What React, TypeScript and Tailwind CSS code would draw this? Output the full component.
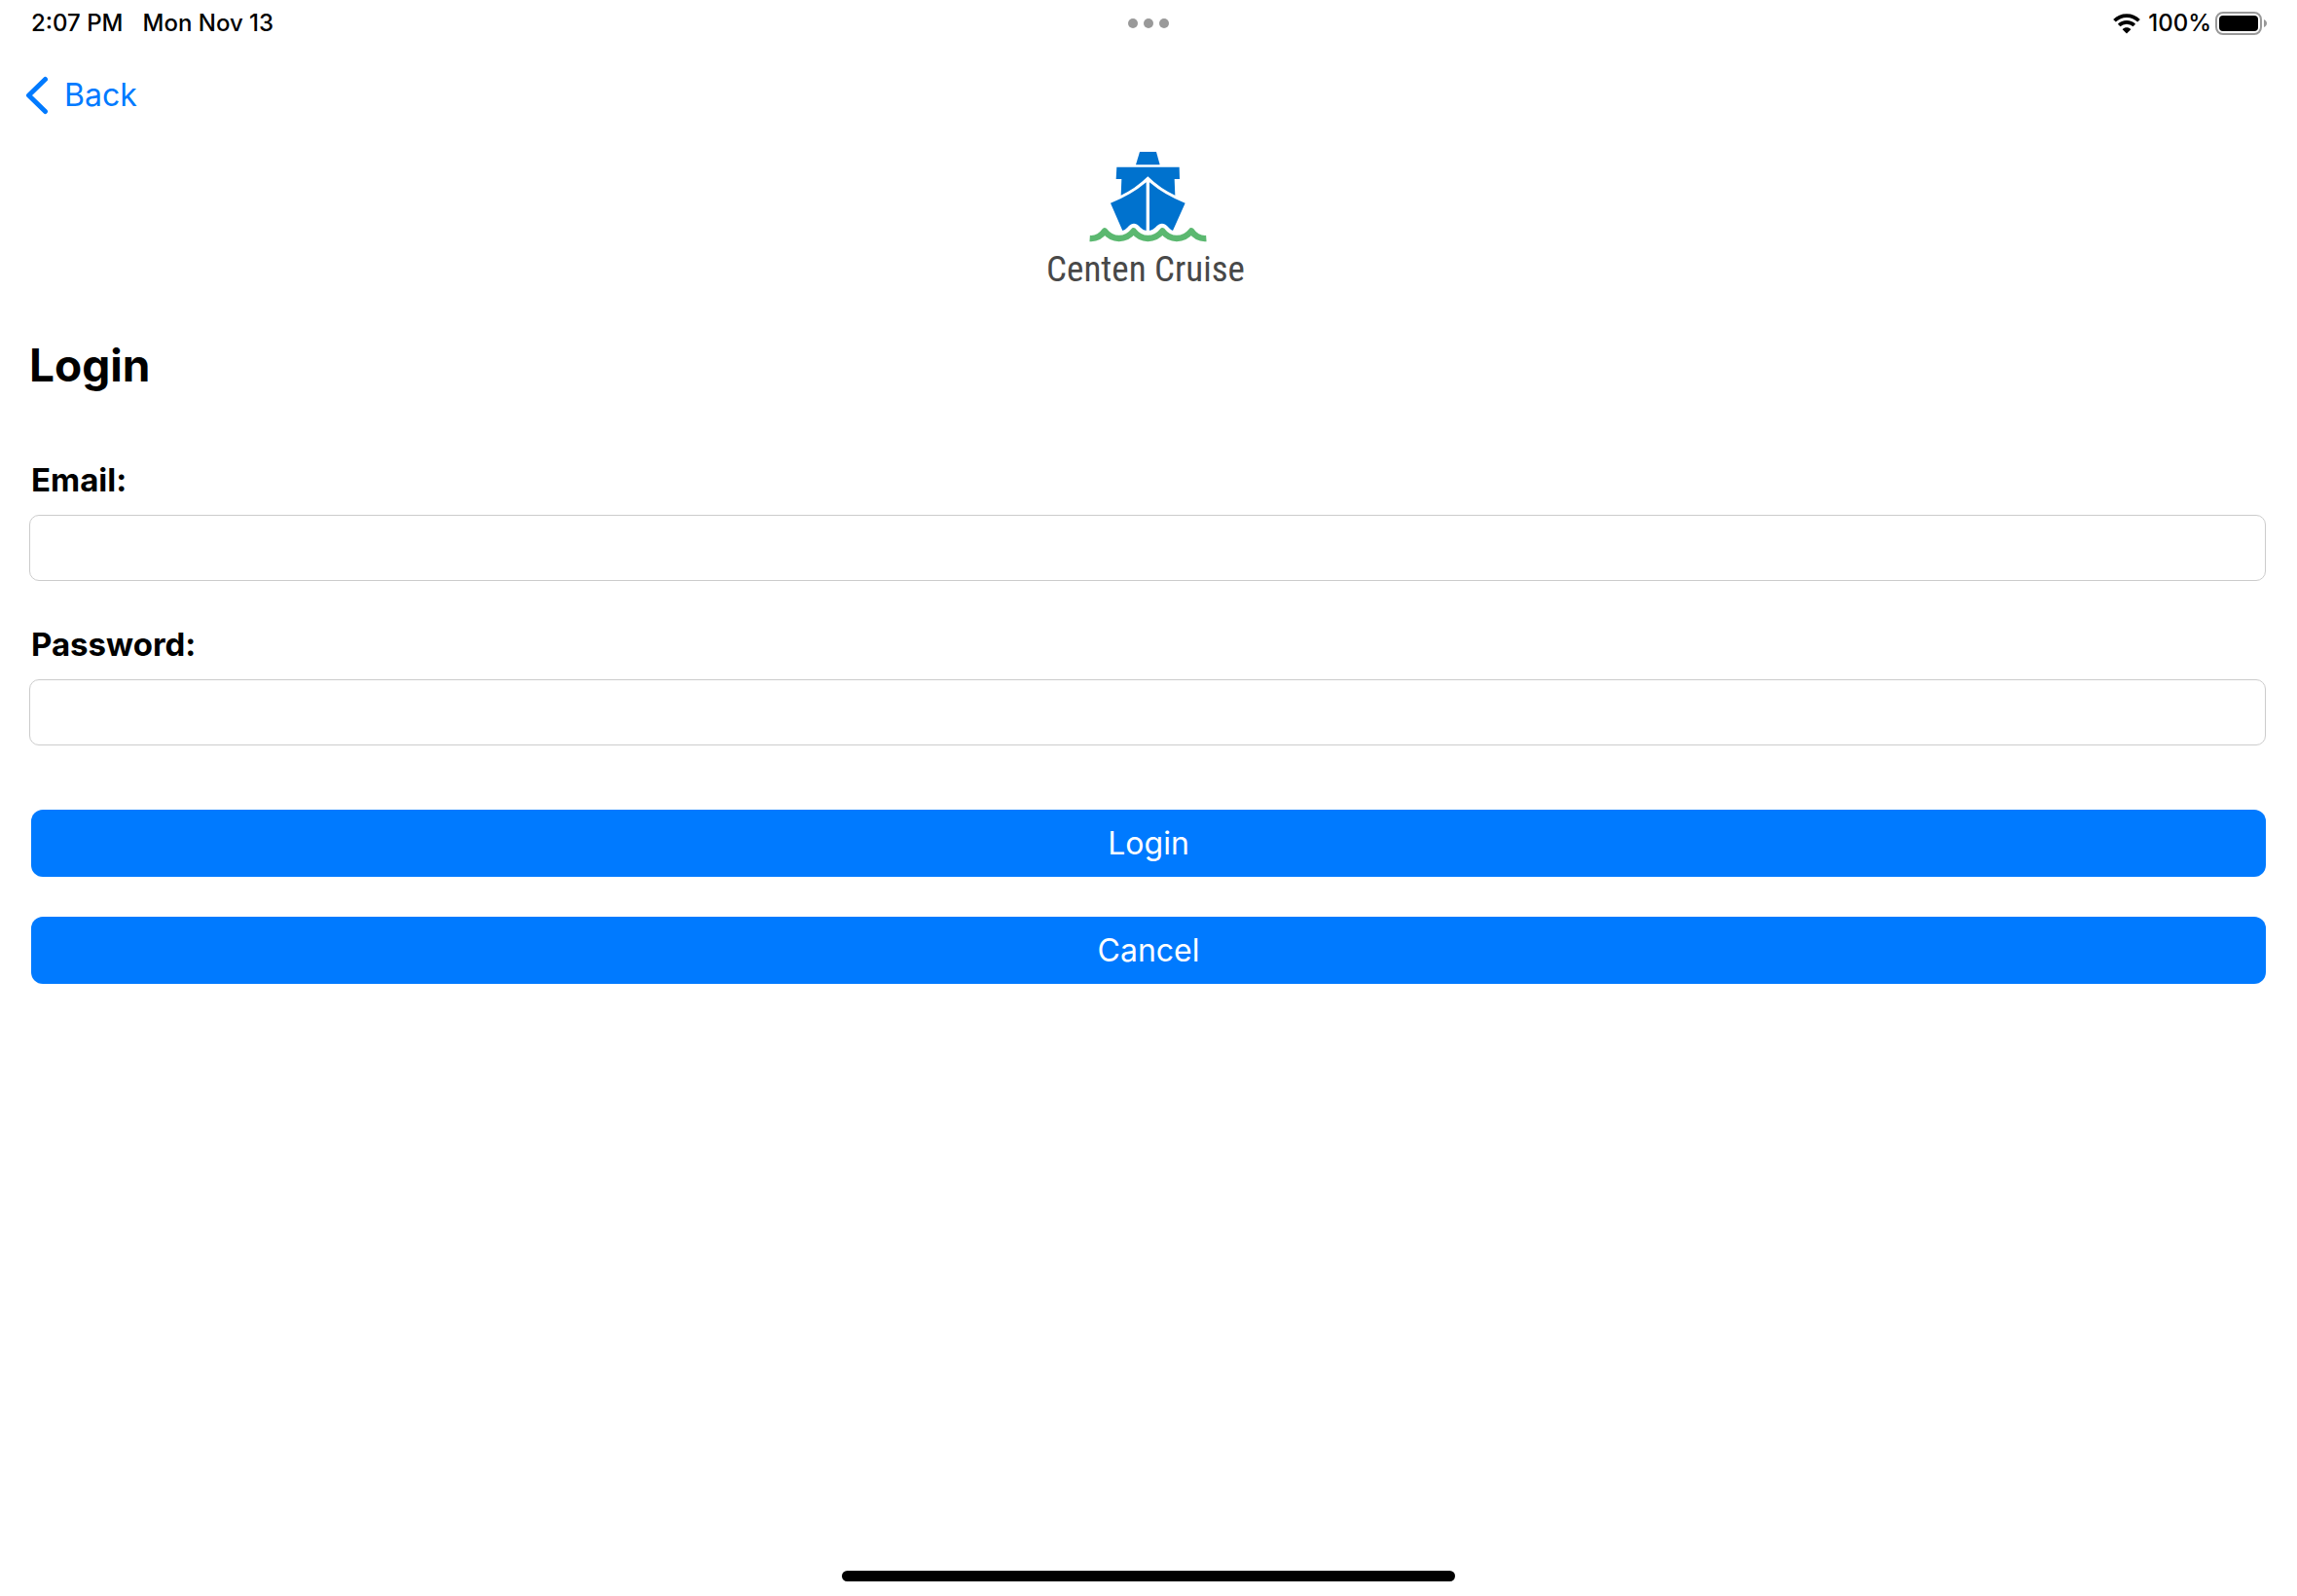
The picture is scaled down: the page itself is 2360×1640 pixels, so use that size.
import React from "react";

function WifiIcon() {
  return (
    <svg viewBox="0 0 84 62" className="h-[21px] w-7" aria-label="Wi-Fi">
      <g fill="none" stroke="#000" strokeWidth="11">
        <path d="M4.500 21.500 C25 0.500 59 0.500 79.500 21.500" />
        <path d="M18.500 35.500 C31.500 23 52.500 23 65.500 35.500" />
      </g>
      <path d="M42 61 L29 48 C36 40.500 48 40.500 55 48 Z" />
    </svg>
  );
}

function BatteryIcon() {
  return (
    <svg viewBox="0 0 54 24" className="h-6 w-[54px]" aria-label="Battery full">
      <rect x="1" y="1" width="46" height="22" rx="7" fill="none" stroke="#999" strokeWidth="2" />
      <rect x="4" y="4" width="40" height="16" rx="4" />
      <path d="M50 8 C54 9.500 54 14.500 50 16 Z" fill="#999" />
    </svg>
  );
}

function StatusBar() {
  return (
    <header className="grid h-12 grid-cols-3 items-center px-[30px] text-2xl font-medium">
      <div className="flex gap-5 pl-0.5">
        <span>2:07 PM</span>
        <span>Mon Nov 13</span>
      </div>
      <div className="flex justify-center gap-1.5">
        <span className="size-2.5 rounded-full bg-[#999]" />
        <span className="size-2.5 rounded-full bg-[#999]" />
        <span className="size-2.5 rounded-full bg-[#999]" />
      </div>
      <div className="flex items-center justify-end">
        <WifiIcon />
        <span className="mr-1 ml-2">100%</span>
        <BatteryIcon />
      </div>
    </header>
  );
}

function Logo() {
  return (
    <div className="flex flex-col items-center pr-0.5">
      <svg viewBox="177 48 363 279" className="h-[93px] w-[121px]" aria-hidden="true">
        <g fill="#0072ce">
          <path d="M333 48 H384 L395 88 H321 Z" />
          <path d="M262 95 H455 L456 132 H440 L442 182 Q398 163 358 124 Q318 163 275 182 L277 132 H260 Z" />
          <path d="M353 142 V291 Q341 288 335 281 Q315 258 295 281 Q288 289 280 291 L243 206 Q306 182 353 142 Z" />
          <path d="M363 142 V291 Q374 288 381 281 Q402 258 422 281 Q428 288 435 291 L473 206 Q410 182 363 142 Z" />
        </g>
        <path
          d="M179 315 Q208 317 225 292 Q243 315 269 315 Q296 315 314 292 Q332 315 358 315 Q385 315 403 292 Q421 315 447 315 Q474 315 492 292 Q509 317 538 315"
          fill="none"
          stroke="#5bb870"
          strokeWidth="19"
          strokeLinejoin="round"
        />
      </svg>
      <p className="mt-1 pr-1 font-['Roboto_Condensed','Roboto','Liberation_Sans',sans-serif] text-[37px] leading-[48px] text-[#484848]">
        Centen Cruise
      </p>
    </div>
  );
}

function Field({ id, label, type }: { id: string; label: string; type: string }) {
  return (
    <div className="flex flex-col">
      <label htmlFor={id} className="mb-4 ml-0.5 text-[33px] leading-10 font-bold">
        {label}
      </label>
      <input
        id={id}
        type={type}
        className="h-[68px] w-full rounded-[10px] border border-[#ccc] px-4 text-[32px] outline-none"
      />
    </div>
  );
}

function ActionButton({ type, children }: { type: "submit" | "button"; children: React.ReactNode }) {
  return (
    <button type={type} className="h-[69px] w-full rounded-xl bg-[#007aff] text-[32px] leading-10 text-white">
      {children}
    </button>
  );
}

export default function App() {
  return (
    <div className="flex min-h-screen flex-col bg-white font-['Inter','Liberation_Sans',sans-serif] text-black">
      <StatusBar />
      <nav className="flex h-[100px] items-center px-[26px]">
        <button type="button" className="flex items-center gap-4 text-[32px] leading-10 text-[#007aff]">
          <svg viewBox="0 0 24 40" className="h-10 w-6" fill="none" stroke="currentColor" strokeWidth="5" strokeLinecap="round" strokeLinejoin="round" aria-hidden="true">
            <path d="M20.500 3.500 L3.500 20 L20.500 36.500" />
          </svg>
          Back
        </button>
      </nav>
      <main className="flex grow flex-col pt-2">
        <Logo />
        <form className="flex flex-col pr-8 pl-[30px]" onSubmit={(e) => e.preventDefault()}>
          <h1 className="mt-[46px] text-[46px] leading-[56px] font-bold">Login</h1>
          <div className="mt-[70px] flex flex-col gap-[45px]">
            <Field id="email" label="Email:" type="email" />
            <Field id="password" label="Password:" type="password" />
          </div>
          <div className="mt-[66px] flex flex-col gap-[41px] pl-0.5">
            <ActionButton type="submit">Login</ActionButton>
            <ActionButton type="button">Cancel</ActionButton>
          </div>
        </form>
      </main>
      <footer className="flex justify-center pb-[15px]">
        <div className="h-[11px] w-[630px] rounded-full bg-black" />
      </footer>
    </div>
  );
}
